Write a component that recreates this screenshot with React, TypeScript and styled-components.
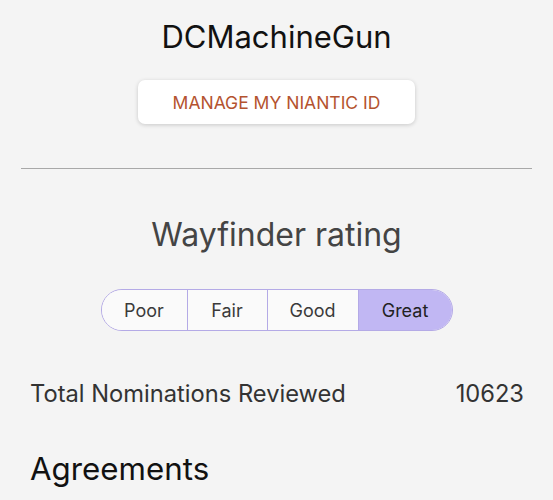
import React from "react";
import styled, { createGlobalStyle } from "styled-components";

const Global = createGlobalStyle`
  html, body { margin: 0; padding: 0; background: #f4f4f4; }
  body { font-family: Inter, "Noto Sans", sans-serif; -webkit-font-smoothing: antialiased; }
`;

const Page = styled.div`
  width: 553px;
  height: 500px;
  overflow: hidden;
  box-sizing: border-box;
  padding: 17px 21px 0;
  display: flex;
  flex-direction: column;
  align-items: center;
`;

const UserName = styled.h1`
  margin: 0;
  font-size: 31px;
  line-height: 40px;
  font-weight: 400;
  color: #111;
`;

const ManageButton = styled.button`
  margin-top: 23px;
  width: 277px;
  height: 44px;
  border: none;
  border-radius: 7px;
  background: #fff;
  box-shadow: 0 1px 4px rgba(0, 0, 0, 0.18);
  color: #b4532f;
  font-family: inherit;
  font-size: 17.5px;
  cursor: pointer;
`;

const Divider = styled.hr`
  align-self: stretch;
  margin: 44px 0 0;
  border: none;
  border-top: 1px solid #a8a8a8;
`;

const SectionTitle = styled.h2`
  margin: 46px 0 0;
  font-size: 32px;
  line-height: 40px;
  font-weight: 400;
  color: #444;
`;

const Segmented = styled.div`
  margin-top: 34px;
  display: flex;
  height: 42px;
  border: 1px solid #b4aae6;
  border-radius: 21px;
  overflow: hidden;
  box-sizing: border-box;
`;

const Segment = styled.div<{ $active?: boolean; $w: number }>`
  width: ${(p) => p.$w}px;
  display: flex;
  align-items: center;
  justify-content: center;
  font-size: 18px;
  color: ${(p) => (p.$active ? "#222" : "#3a3a3a")};
  background: ${(p) => (p.$active ? "#c1b7f3" : "#fafafa")};
  & + & {
    border-left: 1px solid #b4aae6;
  }
`;

const StatRow = styled.div`
  align-self: stretch;
  margin-top: 48px;
  padding: 0 8px 0 9px;
  display: flex;
  justify-content: space-between;
  font-size: 23.7px;
  line-height: 30px;
  color: #333;
`;

const Heading = styled.h3`
  align-self: stretch;
  margin: 40px 0 0 9px;
  font-size: 31.3px;
  line-height: 40px;
  font-weight: 400;
  color: #111;
`;

const ratings = [
  { label: "Poor", w: 85 },
  { label: "Fair", w: 79 },
  { label: "Good", w: 90 },
  { label: "Great", w: 93, active: true },
];

export default function App() {
  return (
    <>
      <Global />
      <Page>
        <UserName>DCMachineGun</UserName>
        <ManageButton>MANAGE MY NIANTIC ID</ManageButton>
        <Divider />
        <SectionTitle>Wayfinder rating</SectionTitle>
        <Segmented>
          {ratings.map((r) => (
            <Segment key={r.label} $w={r.w} $active={r.active}>
              {r.label}
            </Segment>
          ))}
        </Segmented>
        <StatRow>
          <span>Total Nominations Reviewed</span>
          <span>10623</span>
        </StatRow>
        <Heading>Agreements</Heading>
      </Page>
    </>
  );
}
